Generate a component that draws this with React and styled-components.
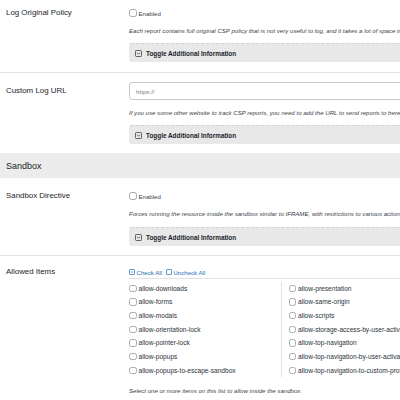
import React from "react";
import styled, { createGlobalStyle } from "styled-components";

const GlobalStyle = createGlobalStyle`
  html, body {
    margin: 0;
    padding: 0;
    background: #fff;
    overflow: hidden;
  }
  body {
    font-family: "Liberation Sans", Arial, sans-serif;
    color: #1d2327;
  }
`;

const Page = styled.div`
  width: 640px;
`;

const Row = styled.div`
  display: grid;
  grid-template-columns: 129px 1fr;
  padding: ${(p) => p.$pad || "8px 0 10px"};
  border-bottom: ${(p) => (p.$divider ? "1px solid #e2e2e4" : "none")};
`;

const Label = styled.div`
  padding-left: 6px;
  font-size: 7.9px;
  line-height: ${(p) => p.$lh || "10px"};
  color: #1d2327;
`;

const Field = styled.div`
  display: flex;
  flex-direction: column;
`;

const CheckLine = styled.label`
  display: flex;
  align-items: center;
  height: 10px;
  font-size: 6.1px;
  color: #3c434a;
`;

const Box = styled.span`
  display: inline-block;
  box-sizing: border-box;
  width: 7.5px;
  height: 7.5px;
  border: 1px solid #a7aaad;
  border-radius: 2.5px;
  background: #fff;
  margin-right: 2px;
  flex-shrink: 0;
`;

const Note = styled.p`
  margin: ${(p) => p.$m || "8px 0 0"};
  font-size: 6.1px;
  line-height: 10px;
  font-style: italic;
  color: #3c434a;
  white-space: nowrap;
`;

const ToggleBar = styled.div`
  display: flex;
  align-items: center;
  gap: 4px;
  margin-top: ${(p) => p.$mt || "7px"};
  height: 19px;
  box-sizing: border-box;
  padding-left: 6px;
  background: #e8e8e8;
  border-top: 1px dashed #d4d4d4;
  border-radius: 2px 0 0 2px;
  font-size: 6.4px;
  font-weight: bold;
  color: #1d2327;
  svg {
    flex-shrink: 0;
  }
`;

const TextInput = styled.input`
  box-sizing: border-box;
  height: 18px;
  width: 100%;
  margin: 0;
  padding: 0 6px;
  border: 1px solid #c8cacc;
  border-radius: 3px;
  font-family: inherit;
  font-size: 6.2px;
  color: #2c3338;
  outline: none;
  &::placeholder {
    color: #7a7f85;
  }
`;

const SectionHeading = styled.h2`
  margin: 0;
  height: 25px;
  display: flex;
  align-items: center;
  padding-left: 6px;
  background: #ececec;
  font-size: 9px;
  font-weight: normal;
  color: #1d2327;
`;

const BulkLinks = styled.div`
  display: flex;
  align-items: center;
  gap: 4px;
  height: 12px;
  border-bottom: 1px solid #e2e2e4;
  font-size: 6.1px;
  color: #2271b1;
`;

const BulkLink = styled.span`
  display: inline-flex;
  align-items: center;
  gap: 1.5px;
`;

const ItemGrid = styled.div`
  display: grid;
  grid-template-columns: 152px 1fr;
  margin-top: 2.5px;
`;

const ItemColumn = styled.div`
  display: flex;
  flex-direction: column;
  padding-left: ${(p) => (p.$split ? "6.5px" : "0")};
  border-left: ${(p) => (p.$split ? "1px solid #e2e2e4" : "none")};
`;

const Item = styled.label`
  display: flex;
  align-items: center;
  height: 13.67px;
  font-size: 6.6px;
  color: #2c3338;
  white-space: nowrap;
`;

function ToggleIcon() {
  return (
    <svg width="7" height="7" viewBox="0 0 14 14">
      <rect x="1" y="1" width="12" height="12" rx="1.5" fill="none" stroke="#3c434a" strokeWidth="1.6" />
      <path d="M4 5.5 L7 8.5 L10 5.5" fill="none" stroke="#3c434a" strokeWidth="1.6" />
    </svg>
  );
}

function SquareIcon({ minus }) {
  return (
    <svg width="6" height="6" viewBox="0 0 12 12">
      <rect x="1" y="1" width="10" height="10" rx="1" fill="none" stroke="#2271b1" strokeWidth="1.4" />
      {minus && <path d="M3.5 6 H8.5" stroke="#2271b1" strokeWidth="1.4" />}
    </svg>
  );
}

function Toggle({ mt }) {
  return (
    <ToggleBar $mt={mt}>
      <ToggleIcon />
      Toggle Additional Information
    </ToggleBar>
  );
}

const leftItems = [
  "allow-downloads",
  "allow-forms",
  "allow-modals",
  "allow-orientation-lock",
  "allow-pointer-lock",
  "allow-popups",
  "allow-popups-to-escape-sandbox",
];

const rightItems = [
  "allow-presentation",
  "allow-same-origin",
  "allow-scripts",
  "allow-storage-access-by-user-activation",
  "allow-top-navigation",
  "allow-top-navigation-by-user-activation",
  "allow-top-navigation-to-custom-protocols",
];

export default function App() {
  return (
    <Page>
      <GlobalStyle />

      <Row $divider>
        <Label>Log Original Policy</Label>
        <Field>
          <CheckLine>
            <Box />
            Enabled
          </CheckLine>
          <Note>
            Each report contains full original CSP policy that is not very useful to log, and it takes a lot of space in the database.
          </Note>
          <Toggle />
        </Field>
      </Row>

      <Row $pad="9px 0 9px">
        <Label $lh="18px">Custom Log URL</Label>
        <Field>
          <TextInput placeholder="https://" />
          <Note>
            If you use some other website to track CSP reports, you need to add the URL to send reports to here.
          </Note>
          <Toggle />
        </Field>
      </Row>

      <SectionHeading>Sandbox</SectionHeading>

      <Row $divider $pad="13px 0 9px">
        <Label>Sandbox Directive</Label>
        <Field>
          <CheckLine>
            <Box />
            Enabled
          </CheckLine>
          <Note>
            Forces running the resource inside the sandbox similar to IFRAME, with restrictions to various actions.
          </Note>
          <Toggle mt="8px" />
        </Field>
      </Row>

      <Row $pad="10px 0 0">
        <Label $lh="12px">Allowed Items</Label>
        <Field>
          <BulkLinks>
            <BulkLink>
              <SquareIcon minus />
              Check All
            </BulkLink>
            <BulkLink>
              <SquareIcon />
              Uncheck All
            </BulkLink>
          </BulkLinks>
          <ItemGrid>
            <ItemColumn>
              {leftItems.map((name) => (
                <Item key={name}>
                  <Box />
                  {name}
                </Item>
              ))}
            </ItemColumn>
            <ItemColumn $split>
              {rightItems.map((name) => (
                <Item key={name}>
                  <Box />
                  {name}
                </Item>
              ))}
            </ItemColumn>
          </ItemGrid>
          <Note $m="9px 0 0">Select one or more items on this list to allow inside the sandbox.</Note>
        </Field>
      </Row>
    </Page>
  );
}
